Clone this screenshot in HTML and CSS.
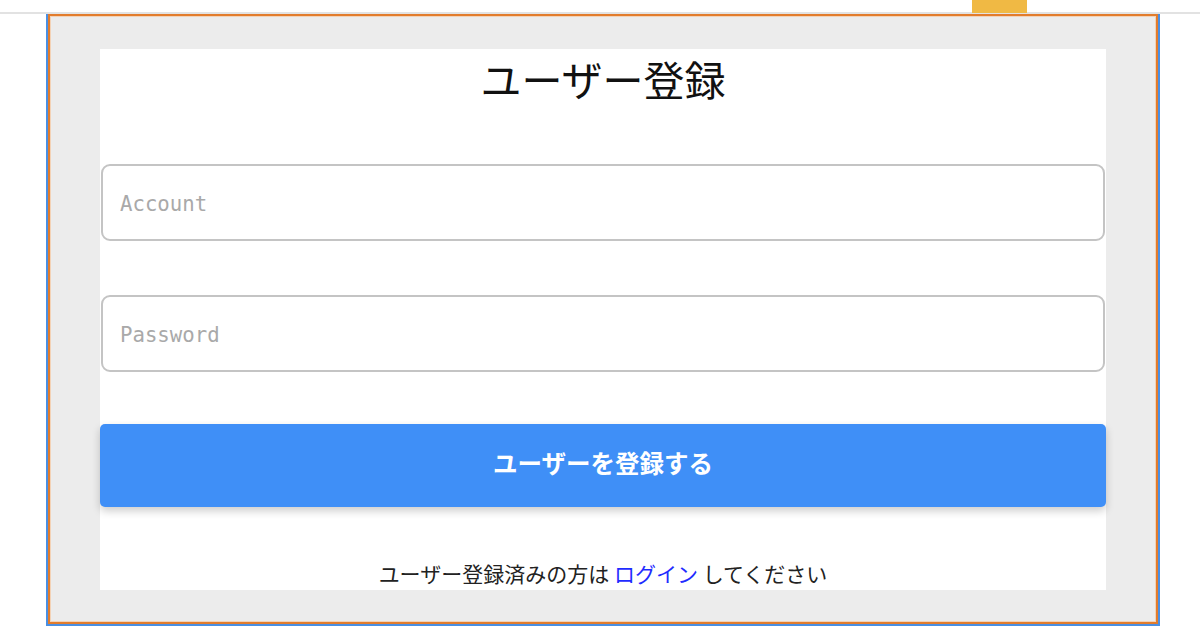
FILE: index.html
```html
<!DOCTYPE html>
<html lang="ja">
<head>
    <meta charset="UTF-8">
    <title>ユーザー登録</title>
    <link rel="stylesheet" href="styles.css">
</head>
<body>
<div class="topbar">
    <span class="tab"></span>
</div>
<div class="frame">
    <div class="panel">
        <form class="card">
            <h1 class="title">ユーザー登録</h1>
            <input class="field" type="text" placeholder="Account">
            <input class="field field-pw" type="password" placeholder="Password">
            <button class="submit" type="button">ユーザーを登録する</button>
            <p class="note">ユーザー登録済みの方は <a href="javascript:;">ログイン</a> してください</p>
        </form>
    </div>
</div>
</body>
</html>
```

FILE: styles.css
```css
body,div,form,h1,p{margin:0;padding:0;}
body{background:#fff;color:#222;font-family:"Noto Sans CJK JP","Noto Sans",sans-serif;}
.topbar{display:flex;justify-content:flex-end;height:12px;padding-right:173px;border-bottom:2px solid #e2e2e2;}
.tab{width:55px;height:13px;background:#f0b944;}
.frame{width:1110px;margin-left:46px;border:2px solid #4b8fe2;border-top:0;}
.panel{padding:33px 50px 32px;background:#ececec;border:2px solid #e27c2c;box-shadow:inset 0 0 0 1px #f3d2b6;}
.card{display:flex;flex-direction:column;background:#fff;}
.title{font-size:41px;font-weight:400;line-height:58px;text-align:center;color:#111;}
.field{height:77px;margin:57px 1px 0;padding:3px 17px 0;box-sizing:border-box;border:2px solid #c4c4c4;border-radius:9px;font:20.7px "DejaVu Sans Mono",monospace;color:#333;outline:none;}
.field::placeholder{color:#a9a9a9;}
.field-pw{margin-top:54px;}
.submit{height:83px;margin-top:52px;padding:0 0 6px;border:0;border-radius:5px;background:#3f8ff7;color:#fff;font:700 24.5px "Noto Sans CJK JP",sans-serif;box-shadow:0 4px 8px rgba(0,0,0,.2);cursor:pointer;}
.note{margin-top:52px;padding-bottom:2px;font-size:21px;line-height:29px;text-align:center;color:#222;}
.note a{color:#1f2cff;text-decoration:none;}
```
